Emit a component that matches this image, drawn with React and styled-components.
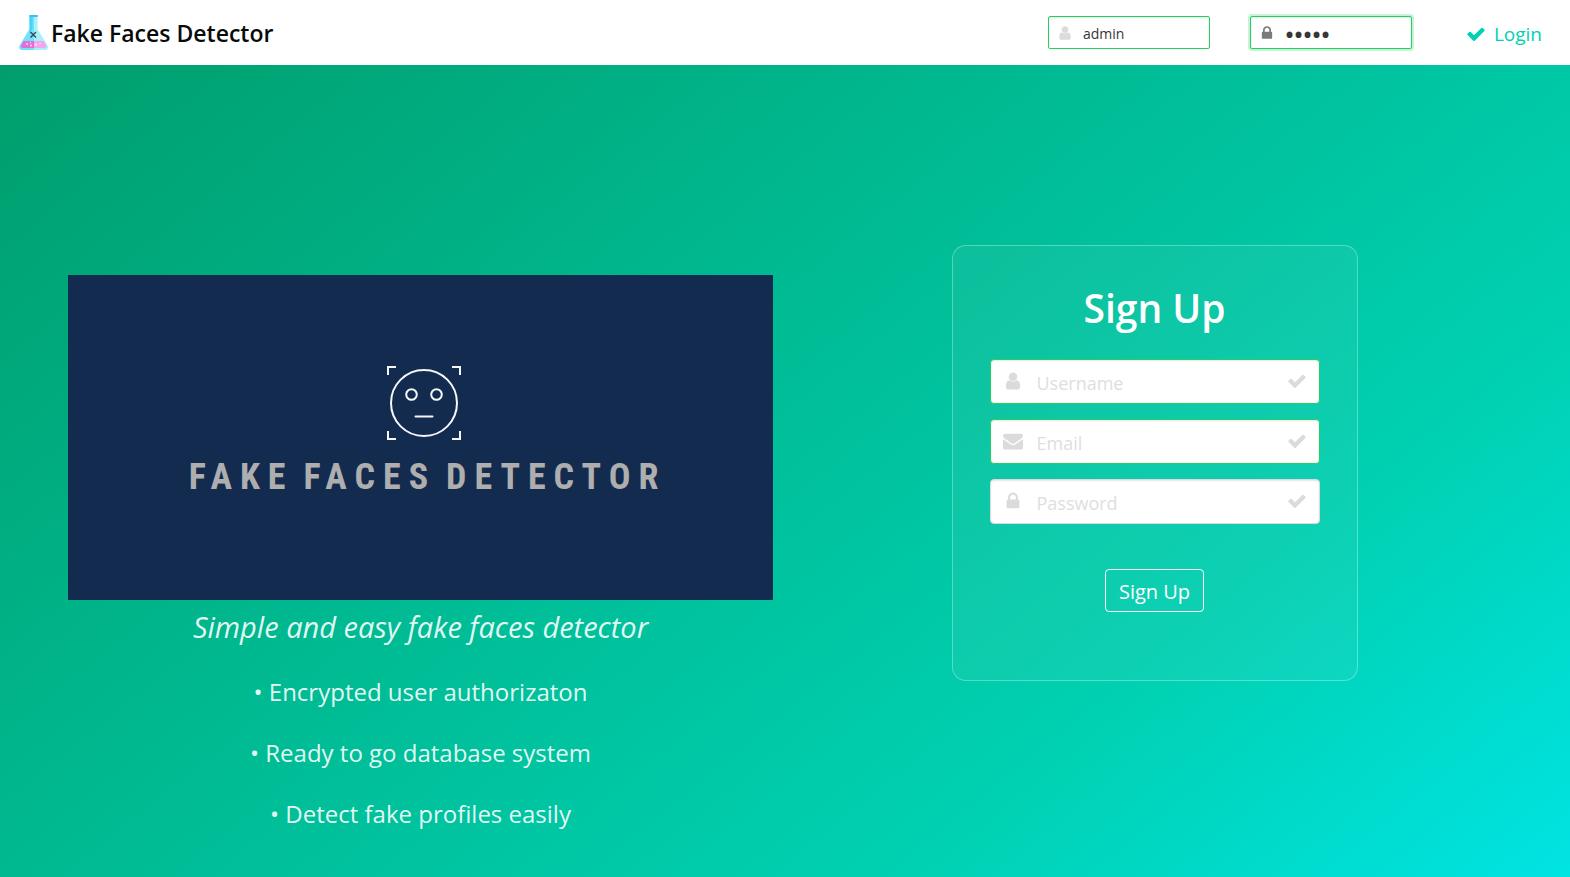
import React, { useState } from "react";
import styled, { createGlobalStyle } from "styled-components";

const GlobalStyle = createGlobalStyle`
  *, *::before, *::after { box-sizing: border-box; }
  body {
    margin: 0;
    font-family: "Open Sans", "Noto Sans", sans-serif;
    color: #363636;
  }
  #root { min-height: 100vh; display: flex; flex-direction: column; }
`;

const Navbar = styled.nav`
  display: flex;
  align-items: center;
  justify-content: space-between;
  height: 65px;
  padding: 0 28px 0 19px;
  background: #fff;
`;

const Brand = styled.a`
  display: flex;
  align-items: center;
  gap: 2px;
  color: #0a0a0a;
  font-size: 23px;
  line-height: 36px;
  font-weight: 600;
  text-decoration: none;
`;

const LoginForm = styled.form`
  display: flex;
  align-items: center;
  gap: 40px;
`;

const LoginButton = styled.button`
  display: flex;
  align-items: center;
  gap: 8px;
  margin-left: 14px;
  padding: 2px 0 0;
  border: 0;
  background: none;
  color: #00d1b2;
  font: inherit;
  font-size: 19px;
  line-height: 28px;
  cursor: pointer;
`;

const Control = styled.label`
  display: grid;
  align-items: center;
  width: ${(p) => (p.$small ? "162px" : "100%")};

  > * { grid-area: 1 / 1; }
`;

const TextInput = styled.input`
  width: 100%;
  height: ${(p) => (p.$small ? "33px" : "45px")};
  padding: ${(p) => (p.$small ? "4px 12px 2px 34px" : "2px 45px 0 46px")};
  border: 1px solid ${(p) => (p.$valid ? "#23d160" : "#dbdbdb")};
  border-radius: ${(p) => (p.$small ? "2px" : "4px")};
  background: #fff;
  box-shadow: inset 0 1px 2px rgba(10, 10, 10, 0.1)
    ${(p) => (p.$active ? ", 0 0 0 2px rgba(35, 209, 96, 0.25)" : "")};
  color: #363636;
  font-family: inherit;
  font-size: ${(p) => (p.$small ? "14px" : "18px")};
  outline: none;

  &[type="password"]:not(:placeholder-shown) { font-size: 24px; font-weight: 600; }
  &::placeholder { color: #dedede; opacity: 1; }
`;

const FieldIcon = styled.span`
  display: flex;
  align-items: center;
  justify-content: center;
  justify-self: ${(p) => (p.$right ? "end" : "start")};
  z-index: 1;
  width: ${(p) => (p.$small ? "34px" : "46px")};
  padding-bottom: ${(p) => (p.$small ? "0" : "2px")};
  color: ${(p) => (p.$active ? "#7a7a7a" : "#dbdbdb")};
  pointer-events: none;
`;

const Hero = styled.main`
  flex: 1;
  display: grid;
  grid-template-columns: 1fr 1fr;
  align-items: start;
  gap: 30px;
  padding: 180px 62px 32px 68px;
  background: linear-gradient(141deg, #009e6c 0%, #00d1b2 71%, #00e7eb 100%) 0 0 / 100% calc(100% + 90px) no-repeat;
`;

const Intro = styled.section`
  margin-top: 30px;
  text-align: center;
  color: rgba(255, 255, 255, 0.9);
`;

const Banner = styled.div`
  display: flex;
  flex-direction: column;
  align-items: center;
  height: 325px;
  padding: 90px 0 0 6px;
  background: #142b50;
`;

const BannerName = styled.div`
  display: flex;
  gap: 10px;
  margin-top: 16px;
  padding-left: 8px;
  color: #aeaeae;
  font-family: "Roboto Condensed", "Liberation Sans Narrow", Roboto, sans-serif;
  font-size: 36px;
  line-height: 41px;
  font-weight: 700;
  letter-spacing: 8px;
  white-space: nowrap;
`;

const Tagline = styled.p`
  margin: 5px 0 0;
  font-size: 29px;
  line-height: 44px;
  font-style: italic;
`;

const Features = styled.ul`
  display: flex;
  flex-direction: column;
  gap: 25px;
  margin: 25px 0 0;
  padding: 0;
  list-style: none;
`;

const Feature = styled.li`
  font-size: 24px;
  line-height: 36px;

  &::before { content: "• "; }
`;

const SignUpCard = styled.form`
  display: flex;
  flex-direction: column;
  align-items: center;
  gap: 15px;
  justify-self: center;
  width: 406px;
  margin-right: 2px;
  padding: 34px 37px 68px;
  border: 1px solid rgba(255, 255, 255, 0.3);
  border-radius: 14px;
  background: rgba(219, 219, 219, 0.06);
`;

const CardTitle = styled.h1`
  margin: 0 0 8px;
  color: #fff;
  font-size: 39px;
  line-height: 56px;
  font-weight: 600;
`;

const SignUpButton = styled.button`
  height: 43px;
  margin-top: 30px;
  padding: 2px 13px 0;
  border: 1px solid #fff;
  border-radius: 4px;
  background: transparent;
  color: #fff;
  font: inherit;
  font-size: 20px;
  cursor: pointer;
`;

const ICONS = {
  user: "M1536 1399q0 109-62.5 187t-150.5 78h-854q-88 0-150.5-78t-62.5-187q0-85 8.5-160.5t31.5-152 58.5-131 94-89 134.5-34.5q131 128 313 128t313-128q76 0 134.5 34.5t94 89 58.5 131 31.5 152 8.5 160.5zm-256-887q0 159-112.5 271.5t-271.5 112.5-271.5-112.5-112.5-271.5 112.5-271.5 271.5-112.5 271.5 112.5 112.5 271.5z",
  lock: "M640 768h512v-192q0-106-75-181t-181-75-181 75-75 181v192zm832 96v576q0 40-28 68t-68 28h-960q-40 0-68-28t-28-68v-576q0-40 28-68t68-28h32v-192q0-184 132-316t316-132 316 132 132 316v192h32q40 0 68 28t28 68z",
  check: "M1671 566q0 40-28 68l-724 724-136 136q-28 28-68 28t-68-28l-136-136-362-362q-28-28-28-68t28-68l136-136q28-28 68-28t68 28l294 295 656-657q28-28 68-28t68 28l136 136q28 28 28 68z",
  envelope: "M1792 710v794q0 66-47 113t-113 47h-1472q-66 0-113-47t-47-113v-794q44 49 101 87 362 246 497 345 57 42 92.5 65.5t94.5 48 110 24.5h2q51 0 110-24.5t94.5-48 92.5-65.5q170-123 498-345 57-39 100-87zm0-294q0 79-49 151t-122 123q-376 261-468 325-10 7-42.5 31t-54 38.5-52 32.5-57.5 27-50 9h-2q-23 0-50-9t-57.5-27-52-32.5-54-38.5-42.5-31q-91-64-262-182.5t-205-142.5q-62-42-117-115.5t-55-136.5q0-78 41.5-130t118.5-52h1472q65 0 112.5 47t47.5 113z",
};

function Icon({ name, size = 20 }) {
  return (
    <svg width={size} height={size} viewBox="0 0 1792 1792" fill="currentColor" aria-hidden="true">
      <path d={ICONS[name]} />
    </svg>
  );
}

function Flask() {
  return (
    <svg width="30" height="36" viewBox="0 0 30 36" aria-hidden="true">
      <path d="M10.500 1.500H15V35H3.200C.4 35-.7 32.600.600 30.400L10.500 14z" fill="#6fe3fb" />
      <path d="M15 1.500h3.500V14l10 16.400C29.800 32.600 28.600 35 25.800 35H15z" fill="#a5f1fc" />
      <path d="M10.500 2h3v12l-3 4z" fill="#45d3f7" />
      <path d="M4.500 26H15v7H3.800C2.200 33 1.500 31.600 2.200 30.200z" fill="#e070d8" />
      <path d="M15 26h9.800l2.300 4.200c.7 1.400 0 2.800-1.600 2.800H15z" fill="#f5a5ec" />
      <rect x="10" y="0" width="9" height="2" rx="1" fill="#3cc0f2" />
      <path d="M11.500 17l5.500 5.500M17 17l-5.500 5.500" stroke="#3c4653" strokeWidth="1.400" fill="none" />
      <g fill="#fbdcf8">
        <circle cx="8" cy="29" r="0.900" />
        <circle cx="11.500" cy="27.500" r="0.700" />
        <circle cx="12" cy="30.500" r="1" />
        <circle cx="17" cy="29.500" r="1.200" />
        <circle cx="21" cy="28.500" r="0.800" />
      </g>
    </svg>
  );
}

function FaceMark() {
  return (
    <svg width="76" height="76" viewBox="0 0 76 76" fill="none" stroke="#f4f6fa" strokeWidth="2" aria-hidden="true">
      <path d="M2 10V2h8M66 2h8v8M74 66v8h-8M10 74H2v-8" />
      <circle cx="38" cy="38" r="33" />
      <circle cx="25.500" cy="29.500" r="5.300" />
      <circle cx="50.500" cy="29.500" r="5.300" />
      <path d="M29.500 51.500h17" strokeLinecap="round" />
    </svg>
  );
}

function Field({ icon, label, checked, small, active, valid, placeholder = "", ...rest }) {
  return (
    <Control $small={small}>
      <TextInput
        aria-label={label}
        placeholder={placeholder}
        $small={small}
        $active={active}
        $valid={valid}
        {...rest}
      />
      <FieldIcon $small={small} $active={active}>
        <Icon name={icon} size={small ? 16 : 20} />
      </FieldIcon>
      {checked && (
        <FieldIcon $right>
          <Icon name="check" />
        </FieldIcon>
      )}
    </Control>
  );
}

const FEATURES = [
  "Encrypted user authorizaton",
  "Ready to go database system",
  "Detect fake profiles easily",
];

export default function App() {
  const [user, setUser] = useState("admin");
  const [secret, setSecret] = useState("admin");
  const stay = (e) => e.preventDefault();

  return (
    <>
      <GlobalStyle />
      <Navbar>
        <Brand href="#">
          <Flask />
          Fake Faces Detector
        </Brand>
        <LoginForm onSubmit={stay}>
          <Field small valid icon="user" label="Username" type="text" value={user} onChange={(e) => setUser(e.target.value)} />
          <Field small valid active icon="lock" label="Password" type="password" value={secret} onChange={(e) => setSecret(e.target.value)} />
          <LoginButton type="submit">
            <Icon name="check" />
            Login
          </LoginButton>
        </LoginForm>
      </Navbar>
      <Hero>
        <Intro>
          <Banner>
            <FaceMark />
            <BannerName>
              <span>FAKE</span> <span>FACES</span> <span>DETECTOR</span>
            </BannerName>
          </Banner>
          <Tagline>Simple and easy fake faces detector</Tagline>
          <Features>
            {FEATURES.map((text) => (
              <Feature key={text}>{text}</Feature>
            ))}
          </Features>
        </Intro>
        <SignUpCard onSubmit={stay}>
          <CardTitle>Sign Up</CardTitle>
          <Field valid checked icon="user" label="New username" type="text" placeholder="Username" />
          <Field valid checked icon="envelope" label="Email" type="email" placeholder="Email" />
          <Field checked icon="lock" label="New password" type="password" placeholder="Password" />
          <SignUpButton type="submit">Sign Up</SignUpButton>
        </SignUpCard>
      </Hero>
    </>
  );
}
